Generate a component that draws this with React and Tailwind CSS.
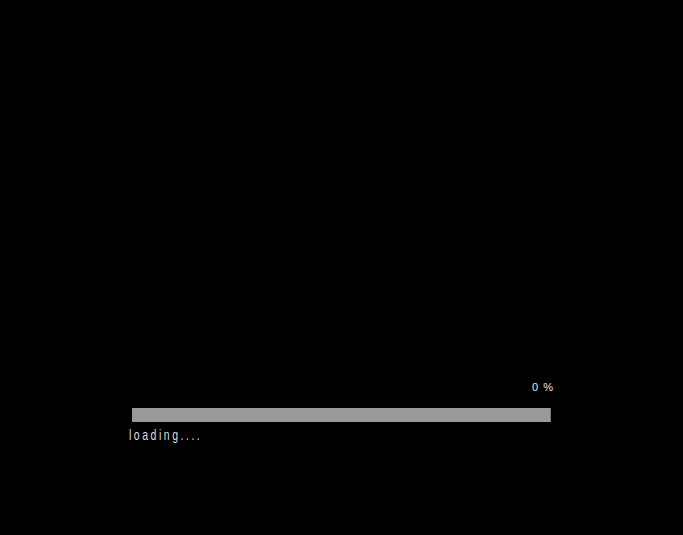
import React from "react";

const App = () => {
  const progress = 0;

  return (
    <div className="w-full h-[535px] bg-black flex justify-center" style={{ fontFamily: '"Liberation Sans", Arial, sans-serif' }}>
      <div className="w-[419px] pt-[381px]">
        {/* Percent */}
        <div className="flex justify-end">
          <span className="text-[11px] leading-[13px] text-[#e6e6e6] tracking-[1px] mr-[-3px]">{progress} %</span>
        </div>

        {/* Bar */}
        <div className="mt-[14px] h-[14px] bg-[#999999] border-r border-[#777777]" />

        {/* Label */}
        <div className="mt-[4px] ml-[-3px] text-[15px] leading-[17px] text-[#dddddd] tracking-[3.6px] scale-x-[0.7] origin-left">
          loading....
        </div>
      </div>
    </div>
  );
};

export default App;
